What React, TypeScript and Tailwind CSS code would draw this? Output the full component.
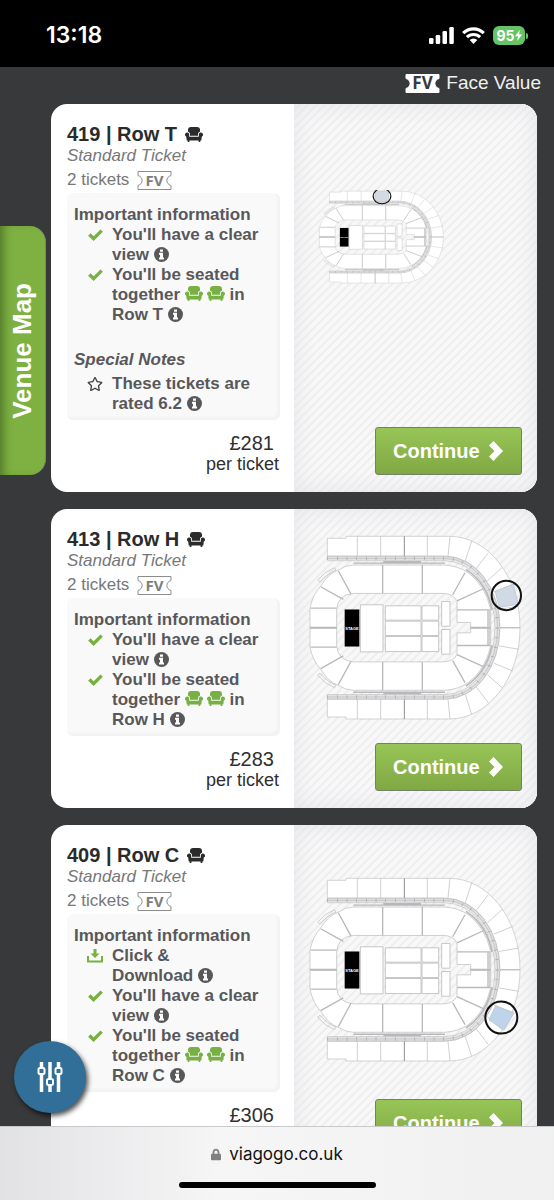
import React from 'react';
import { FaLock, FaRegStar } from 'react-icons/fa';

type NoteKind = 'download' | 'view' | 'seated';

interface Highlight {
    cx: number;
    cy: number;
    r: number;
    seat: string;
    fill: string;
}

interface Listing {
    section: string;
    row: string;
    price: string;
    notes: NoteKind[];
    rating?: string;
    mapClass: string;
    highlight: Highlight;
}

const LISTINGS: Listing[] = [
    {
        section: '419',
        row: 'T',
        price: '£281',
        notes: ['view', 'seated'],
        rating: '6.2',
        mapClass: 'mt-[86px] ml-[23px] w-[130px] h-[94px]',
        highlight: { cx: 378, cy: 109, r: 45, seat: 'M343 79H412V138H398A45 45 0 0 1 358 138H343Z', fill: '#d3dae2' },
    },
    {
        section: '413',
        row: 'H',
        price: '£283',
        notes: ['view', 'seated'],
        mapClass: 'mt-[25px] ml-3 w-[220px] h-[187px]',
        highlight: { cx: 649, cy: 256, r: 44, seat: 'M615 243L670 223L685 282L628 292Z', fill: '#d1dae4' },
    },
    {
        section: '409',
        row: 'C',
        price: '£306',
        notes: ['download', 'view', 'seated'],
        mapClass: 'mt-[51px] ml-3 w-[220px] h-[187px]',
        highlight: { cx: 634, cy: 496, r: 48, seat: 'M617 460L672 482L642 533L597 503Z', fill: '#bfd3ea' },
    },
];

const Couch: React.FC<{ className?: string }> = ({ className = '' }) => (
    <svg viewBox="0 0 18 15" className={`inline-block w-[18px] h-[15px] ${className}`} fill="currentColor" aria-hidden="true">
        <path d="M3 4.800V3a3 3 0 0 1 3-3h6a3 3 0 0 1 3 3v1.800c-1.300.3-2 1.200-2 2.500v1.400H5V7.300c0-1.300-.7-2.200-2-2.500z" />
        <path d="M2 5.600a2 2 0 0 1 2.200 2v2.200h9.600V7.600a2.100 2.100 0 1 1 3 2L16.300 13.500h-1V15h-1.700v-1.500H4.400V15H2.700v-1.500h-1L1.200 9.600A2.100 2.100 0 0 1 2 5.600z" />
    </svg>
);

const FaceValueTicket: React.FC<{ filled?: boolean }> = ({ filled = false }) => (
    <svg viewBox="0 0 35 19" className="inline-block w-[35px] h-[19px] flex-none overflow-visible" role="img" aria-label="Face value">
        <path
            d="M1 .5H34V4.500C28.500 6 28.500 13 34 14.500V18.500H1V14.500C6.500 13 6.500 6 1 4.500Z"
            fill={filled ? '#fff' : 'none'}
            stroke={filled ? '#fff' : '#8c8c8c'}
        />
        <text
            x="17.5"
            y="15"
            textAnchor="middle"
            fontSize={filled ? 17 : 15}
            fontWeight="700"
            fontFamily="'Open Sans', sans-serif"
            fill={filled ? '#38393b' : '#7d7d7d'}
        >
            FV
        </text>
    </svg>
);

const DownloadIcon: React.FC = () => (
    <svg viewBox="0 0 16 14" className="w-4 h-[14px]" fill="currentColor" aria-hidden="true">
        <path d="M6.500 0h3v4.500h3L8 9 3.500 4.500h3z" />
        <path d="M0 7h2v4.500h12V7h2v6.500H0z" />
    </svg>
);

const CheckIcon: React.FC = () => (
    <svg viewBox="0 0 15 12" className="h-3 w-[15px]" fill="none" stroke="currentColor" strokeWidth="3.400" aria-hidden="true">
        <path d="M1.300 5.500L5.600 9.600L13.700 1.600" />
    </svg>
);

const Info: React.FC = () => (
    <svg viewBox="0 0 15 15" className="inline-block w-[15px] h-[15px] align-[-2px]" aria-hidden="true">
        <circle cx="7.500" cy="7.500" r="7.500" fill="#58585a" />
        <path d="M6 2.400h3v2.300H6zM5 5.800h4v4.800h1v1.900H5v-1.900h1V7.700H5z" fill="#fff" />
    </svg>
);

const Note: React.FC<{ icon: React.ReactNode; children: React.ReactNode }> = ({ icon, children }) => (
    <li className="flex gap-[9px] pl-[13px]">
        <span className="flex h-5 w-4 flex-none items-center justify-center text-[#79b043]">{icon}</span>
        <span>{children}</span>
    </li>
);

// upper half of the bowl, the lower half is the same drawing flipped
const MapHalf: React.FC = () => (
    <g fill="none" stroke="#b9b9bb" strokeWidth="2">
        <path d="M112 150V85H168V79H478A212 273 0 0 1 690 352H630A165 214 0 0 0 465 138H112" fill="#fff" stroke="#c0c0c2" />
        <path d="M202 79V138M272 79V138M412 79V138M480 79L474 138M545 93L526 152M595 128L558 176M636 173L592 212M668 223L612 246M686 288L626 298M690 352H630" />
        <path d="M343 79V138" stroke="#8f8f91" strokeWidth="3" />
        <path d="M112 145H465A157 207 0 0 1 622 352" stroke="#e2e2e4" strokeWidth="10" />
        <path d="M112 139H465A164 213 0 0 1 629 352M112 145H465A158 207 0 0 1 623 352M112 152H465A150 200 0 0 1 615 352" />
        <path d="M112 145H465A157 207 0 0 1 622 352" stroke="#a5a5a7" strokeWidth="10" strokeDasharray="2 27" />
        <path d="M190 159H465M280 155H393" stroke="#b8b8ba" strokeWidth="4" />
        <path d="M83 210Q105 184 133 173M90 216Q110 192 138 180" />
        <path d="M83 210L90 216M133 173L138 180" />
        <path
            d="M60 352V294Q68 254 92 228Q115 190 145 180Q165 166 190 165H465Q505 168 535 188Q585 225 602 297V352H542V337H501V272Q488 250 460 250H190Q142 254 140 300V352Z"
            fill="#fff"
        />
        <path d="M528 178Q590 218 606 300" strokeWidth="5" />
        <path d="M596 300V350" strokeWidth="10" stroke="#d0d0d2" />
        <path d="M278 165V250M397 165V250M145 182L183 252M92 230L160 268M62 294H140M525 188L488 254M580 236L501 272M501 299H600" strokeWidth="4" />
        <path d="M60 352H140M542 352H602" strokeWidth="5" />
    </g>
);

const VenueMap: React.FC<{ className: string; highlight: Highlight }> = ({ className, highlight }) => (
    <svg viewBox="48 72 660 560" preserveAspectRatio="none" className={className} role="img" aria-label="Seating map">
        <MapHalf />
        <g transform="matrix(1 0 0 -1 0 705)">
            <MapHalf />
        </g>
        <g fill="#fff" stroke="#bcbcbe" strokeWidth="2.500">
            <path d="M211 284H279V425H211ZM286 287H393V330H286ZM286 333H393V376H286ZM286 379H393V424H286Z" />
            <path d="M396 287H446V330H396ZM396 333H446V376H396ZM396 379H446V424H396ZM455 274H480V348H455ZM455 358H480V432H455Z" />
        </g>
        <rect x="164" y="298" width="44" height="111" fill="#000" />
        <text x="186" y="358" textAnchor="middle" fontSize="12" fontWeight="700" fontFamily="'Liberation Sans', sans-serif" fill="#fff">
            STAGE
        </text>
        <path d={highlight.seat} fill={highlight.fill} stroke="#b4bcc6" strokeWidth="2" />
        <circle cx={highlight.cx} cy={highlight.cy} r={highlight.r} fill="none" stroke="#111" strokeWidth="6" />
    </svg>
);

const renderNote = (kind: NoteKind, row: string) => {
    if (kind === 'download') {
        return (
            <Note key={kind} icon={<DownloadIcon />}>
                Click &amp; <span className="whitespace-nowrap">Download <Info /></span>
            </Note>
        );
    }
    if (kind === 'view') {
        return (
            <Note key={kind} icon={<CheckIcon />}>
                You'll have a clear <span className="whitespace-nowrap">view <Info /></span>
            </Note>
        );
    }
    return (
        <Note key={kind} icon={<CheckIcon />}>
            You'll be seated together <Couch className="align-[-1px] text-[#79b043]" />
            <Couch className="ml-1 align-[-1px] text-[#79b043]" /> in{' '}
            <span className="whitespace-nowrap">Row {row} <Info /></span>
        </Note>
    );
};

const TicketCard: React.FC<{ listing: Listing }> = ({ listing }) => (
    <article className="flex flex-none overflow-hidden rounded-2xl bg-white">
        <div className="w-1/2 flex-none pt-5 pr-[14px] pb-[18px] pl-4">
            <h2 className="flex items-center gap-2 text-xl leading-5 font-bold text-[#2b2b2c]">
                {listing.section} | Row {listing.row}
                <Couch />
            </h2>
            <p className="text-[17px] leading-6 text-[#777] italic">Standard Ticket</p>
            <p className="flex items-center gap-2 text-[17px] leading-6 text-[#777]">
                2 tickets
                <FaceValueTicket />
            </p>
            <div className="mt-px rounded-md bg-[#f9f9fa] pt-3 pr-2 pb-[6px] pl-[7px] text-[17px] leading-5 font-bold text-[#58585a] shadow-[inset_-3px_-3px_2px_#f3f3f4]">
                <h3>Important information</h3>
                <ul>{listing.notes.map((kind) => renderNote(kind, listing.row))}</ul>
                {listing.rating && (
                    <>
                        <h3 className="mt-[25px] italic">Special Notes</h3>
                        <ul className="mt-1">
                            <Note icon={<FaRegStar className="h-4 w-[18px] text-[#444]" />}>
                                These tickets are <span className="whitespace-nowrap">rated {listing.rating} <Info /></span>
                            </Note>
                        </ul>
                    </>
                )}
            </div>
            <p className="mt-3 pr-[6px] text-right text-xl leading-[22px] text-[#2f2f30]">{listing.price}</p>
            <p className="pr-px text-right text-[18px] leading-5 text-[#2f2f30]">per ticket</p>
        </div>
        <div className="flex min-w-0 flex-1 flex-col bg-[#f6f6f7] bg-[repeating-linear-gradient(135deg,#f8f8f9_0px,#f8f8f9_3px,#eeeeef_4px,#eeeeef_5px,#f8f8f9_6px)] shadow-[inset_0_0_22px_#e4e3e7]">
            <VenueMap className={listing.mapClass} highlight={listing.highlight} />
            <button
                type="button"
                className="mt-auto mr-[15px] mb-[17px] flex h-[48px] w-[147px] items-center justify-between self-end rounded-[3px] border border-[#74806a] bg-linear-to-b from-[#98c556] to-[#80a844] pr-[18px] pl-[17px] text-xl font-bold text-white"
            >
                Continue
                <svg viewBox="0 0 14 20" className="h-5 w-[14px]" fill="currentColor" aria-hidden="true">
                    <path d="M4.500 0L14 10L4.500 20L0 15.500L5.500 10L0 4.500Z" />
                </svg>
            </button>
        </div>
    </article>
);

const StatusBar: React.FC = () => (
    <header className="flex h-[67px] flex-none items-center justify-between bg-black pt-1 pr-[26px] pl-[46px] text-white">
        <time className="font-[Inter,sans-serif] text-[23px] font-semibold">13:18</time>
        <div className="flex items-center gap-2">
            <svg viewBox="0 0 25 17" className="h-[17px] w-[25px]" fill="#fff" aria-label="Signal">
                <rect x="0" y="11" width="4.500" height="6" rx="1.300" />
                <rect x="6.700" y="8" width="4.500" height="9" rx="1.300" />
                <rect x="13.500" y="4" width="4.500" height="13" rx="1.300" />
                <rect x="20.300" y="0" width="4.500" height="17" rx="1.300" />
            </svg>
            <svg viewBox="0 0 23 17" className="h-[17px] w-[23px]" fill="none" stroke="#fff" strokeWidth="3.200" aria-label="Wi-Fi">
                <path d="M1.200 6.200A14.600 14.600 0 0 1 21.800 6.200" />
                <path d="M4.900 10.200A9.400 9.400 0 0 1 18.100 10.200" />
                <path d="M7.700 13.100A5.400 5.400 0 0 1 15.300 13.100L11.500 17Z" fill="#fff" stroke="none" />
            </svg>
            <div className="flex items-center gap-px">
                <span className="flex h-[19px] w-8 items-center justify-center rounded-md bg-[#65c466] font-[Inter,sans-serif] text-[14px] leading-[18px] font-bold">
                    95
                    <svg viewBox="0 0 7 11" className="h-[11px] w-[7px]" fill="#fff" aria-hidden="true">
                        <path d="M4.800 0L0 6.200H3L2.200 11L7 4.600H4Z" />
                    </svg>
                </span>
                <span className="h-[6px] w-[2px] rounded-r-full bg-[#65c466]" />
            </div>
        </div>
    </header>
);

const App: React.FC = () => (
    <div className="flex h-screen flex-col overflow-hidden bg-[#38393b] font-['Liberation_Sans',Arial,sans-serif]">
        <StatusBar />
        <main className="relative min-h-0 flex-1 overflow-hidden">
            <div className="flex h-[37px] items-start justify-end gap-[6px] pr-[13px] text-[19px] leading-[31px] text-[#f1f1f1]">
                <span className="flex h-[33px] items-center">
                    <FaceValueTicket filled />
                </span>
                Face Value
            </div>
            <div className="flex flex-col gap-[17px] pr-[17px] pl-[51px]">
                {LISTINGS.map((listing) => (
                    <TicketCard key={listing.section} listing={listing} />
                ))}
            </div>

            <button
                type="button"
                className="absolute top-[159px] left-0 flex h-[249px] w-[46px] items-center justify-center rounded-r-2xl border-r border-[#77876a] bg-[#7eb142] text-[26px] font-bold text-white shadow-[inset_8px_0_8px_-4px_#557d2b]"
            >
                <span className="rotate-180 [writing-mode:vertical-rl]">Venue Map</span>
            </button>

            <button
                type="button"
                aria-label="Filters"
                className="absolute bottom-[13px] left-[14px] flex h-[72px] w-[72px] items-center justify-center rounded-full bg-[#316f99] shadow-[2px_3px_5px_#000000b0]"
            >
                <svg viewBox="0 0 26 30" className="h-[30px] w-[26px]" fill="none" stroke="#fff" strokeWidth="3.500" aria-hidden="true">
                    <path d="M4.500 0V6M4.500 12V30M13 0V17M13 23V30M21.500 0V6M21.500 12V30" />
                    <g strokeWidth="2">
                        <rect x="1.500" y="6" width="6" height="6" rx="1.500" />
                        <rect x="10" y="17" width="6" height="6" rx="1.500" />
                        <rect x="18.500" y="6" width="6" height="6" rx="1.500" />
                    </g>
                </svg>
            </button>
        </main>
        <footer className="flex h-[74px] flex-none flex-col items-center justify-between border-t border-[#c9c9cb] bg-linear-to-r from-[#e2e2e4] via-[#f6f6f7] via-40% to-[#f0f0f1] pt-[15px] pb-3">
            <a href="https://viagogo.co.uk" className="flex items-center gap-2 font-[Inter,sans-serif] text-[17px] leading-6 text-[#111]">
                <FaLock className="h-[13px] w-[10px] text-[#808082]" />
                viagogo.co.uk
            </a>
            <div className="h-[6px] w-[197px] rounded-full bg-black" />
        </footer>
    </div>
);

export default App;
